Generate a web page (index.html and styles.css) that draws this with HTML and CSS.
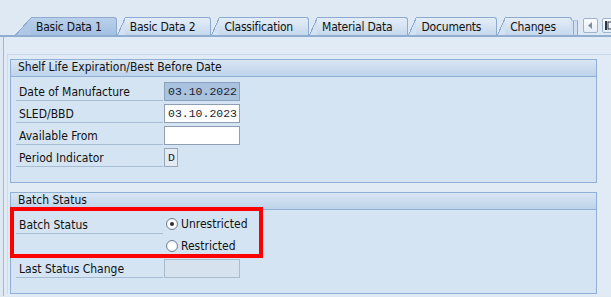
FILE: index.html
```html
<!DOCTYPE html>
<html lang="en">
<head>
    <meta charset="UTF-8">
    <title>Batch - Basic Data 1</title>
    <link rel="stylesheet" href="styles.css">
</head>
<body>
    <div class="tabstrip">
        <div class="tab active">Basic Data 1</div>
        <div class="tab">Basic Data 2</div>
        <div class="tab">Classification</div>
        <div class="tab">Material Data</div>
        <div class="tab">Documents</div>
        <div class="tab more">Changes</div>
        <div class="scroll">
            <span class="scroll-btn"><svg width="5" height="7" viewBox="0 0 5 7"><path d="M4 0 L0 3.5 L4 7 Z" fill="#7f8fa2"/></svg></span>
            <span class="scroll-btn"><svg width="8" height="9" viewBox="0 0 8 9"><rect x="0" y="0" width="2" height="9" fill="#2b3644"/><rect x="3" y="1" width="5" height="7" fill="none" stroke="#2b3644"/></svg></span>
        </div>
    </div>
    <div class="panel">
        <div class="frame">
            <div class="group">
                <div class="group-head">Shelf Life Expiration/Best Before Date</div>
                <div class="group-body">
                    <div class="row">
                        <span class="label">Date of Manufacture</span>
                        <span class="field readonly">03.10.2022</span>
                    </div>
                    <div class="row">
                        <span class="label">SLED/BBD</span>
                        <span class="field">03.10.2023</span>
                    </div>
                    <div class="row">
                        <span class="label">Available From</span>
                        <span class="field"></span>
                    </div>
                    <div class="row">
                        <span class="label">Period Indicator</span>
                        <span class="field short">D</span>
                    </div>
                </div>
            </div>
            <div class="group status">
                <div class="group-head">Batch Status</div>
                <div class="group-body">
                    <div class="row">
                        <span class="label">Batch Status</span>
                        <span class="radio"><i class="dot checked"></i>Unrestricted</span>
                    </div>
                    <div class="row">
                        <span class="label"></span>
                        <span class="radio"><i class="dot"></i>Restricted</span>
                    </div>
                    <div class="row">
                        <span class="label">Last Status Change</span>
                        <span class="field empty"></span>
                    </div>
                </div>
                <div class="highlight"></div>
            </div>
        </div>
    </div>
</body>
</html>
```

FILE: styles.css
```css
* {
	margin: 0;
	padding: 0;
	box-sizing: border-box;
}
body {
	height: 297px;
	overflow: hidden;
	background: #dfe9f3;
	font: 12px "DejaVu Sans Condensed", "DejaVu Sans", sans-serif;
	color: #111;
}

/* tab strip */
.tabstrip {
	display: flex;
	align-items: flex-end;
	height: 37px;
	padding: 17px 0 0 15px;
	border-bottom: 2px solid #8fadd1;
	overflow: hidden;
}
.tab {
	position: relative;
	height: 18px;
	margin-left: 8px;
	padding: 1px 15px 0 5px;
	line-height: 17px;
	letter-spacing: -0.2px;
	white-space: nowrap;
	border-top: 1px solid #8eabcf;
	border-right: 1px solid #8eabcf;
	border-top-right-radius: 3px;
	background: linear-gradient(#e3edf8, #c6d8ed);
}
.tab::before {
	content: "";
	position: absolute;
	left: -8px;
	top: -1px;
	bottom: 0;
	width: 8px;
	background: linear-gradient(to top left, #d3e2f2 calc(50% - 1px), #8eabcf calc(50% - 1px), #8eabcf 50%, transparent 50%);
}
.tab.active {
	margin-left: 16px;
	padding-right: 14px;
	background: linear-gradient(#bad0ea, #a3c0e1);
}
.tab.active::before {
	left: -16px;
	width: 16px;
	background: linear-gradient(to top left, #aec8e6 calc(50% - 1px), #8eabcf calc(50% - 1px), #8eabcf 50%, transparent 50%);
}
.tab.more::after {
	content: "";
	position: absolute;
	right: -7px;
	top: 2px;
	bottom: 0;
	width: 6px;
	border-top: 1px solid #b3c8df;
	border-right: 1px solid #8eabcf;
	background: linear-gradient(to right, #cfdef0 0 2px, #8eabcf 2px 3px, #cfdef0 3px);
}
.scroll {
	display: flex;
	gap: 4px;
	align-self: flex-start;
	margin: 1px 0 0 11px;
}
.scroll-btn {
	display: grid;
	place-items: center;
	width: 15px;
	height: 15px;
	flex: none;
	border: 1px solid #9db3cb;
	border-radius: 2px;
	background: linear-gradient(#fbfdff, #e4edf6);
}

/* content panel */
.panel {
	height: 259px;
	margin-left: 3px;
	border-left: 1px solid #9fb8d5;
	background: #e1ebf5;
	overflow: hidden;
}
.frame {
	margin: 17px 0 0 3px;
	padding: 4px 0 0 2px;
	border-top: 1px solid #c8d8ea;
	border-left: 1px solid #cddcec;
}
.group {
	position: relative;
	width: 587px;
	border: 1px solid #8fb0d4;
	background: #d4e4f3;
}
.group + .group {
	margin-top: 9px;
}
.group-head {
	height: 17px;
	padding-left: 7px;
	line-height: 15px;
	border-bottom: 1px solid #8fb0d4;
	background: linear-gradient(#d8e6f4, #bed3ea);
}
.group-body {
	padding: 2px 0 15px 5px;
}
.row {
	display: flex;
	align-items: flex-end;
	height: 22px;
}
.label {
	width: 147px;
	height: 22px;
	padding: 5px 0 0 3px;
	line-height: 17px;
	border-bottom: 1px solid #a6bdd5;
}
.field {
	width: 76px;
	height: 19px;
	margin-left: 1px;
	padding-left: 3px;
	border: 1px solid #8d9fb3;
	background: #fff;
	font: 11.5px "Liberation Mono", monospace;
	line-height: 17px;
	color: #1d2330;
}
.field.readonly {
	background: #a9c2de;
	border-color: #8aa2bf;
}
.field.short {
	width: 14px;
	background: #e2eaf2;
	border-color: #98a8b9;
}
.field.empty {
	background: #d6e3ef;
	border-color: #a9bccd;
}
.radio {
	display: flex;
	align-items: center;
	gap: 3px;
	height: 22px;
	margin-left: 3px;
	padding-top: 2px;
}
.dot {
	display: grid;
	place-items: center;
	width: 12px;
	height: 12px;
	border: 1px solid #6f8193;
	border-radius: 50%;
	background: radial-gradient(#fff 40%, #e3e9ef);
}
.dot.checked::after {
	content: "";
	width: 4px;
	height: 4px;
	border-radius: 50%;
	background: #2a2f38;
}
.highlight {
	position: absolute;
	left: -1px;
	top: 14px;
	width: 253px;
	height: 51px;
	border: 4px solid #f00;
}
```
